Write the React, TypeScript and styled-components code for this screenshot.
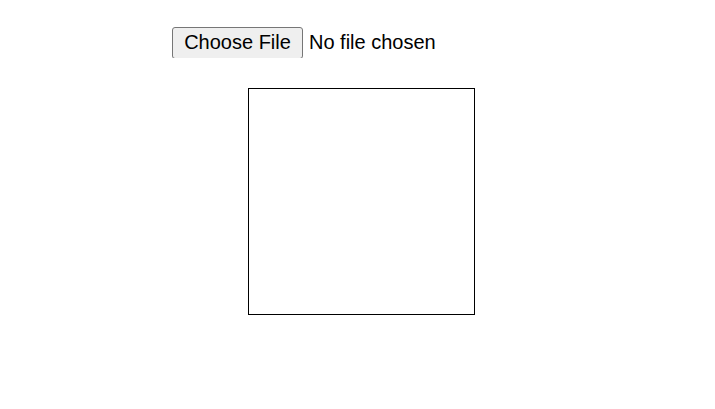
import React from "react";
import styled, { createGlobalStyle } from "styled-components";

const Global = createGlobalStyle`
  html, body { margin: 0; padding: 0; background: #fff; }
  body { font-family: "Liberation Sans", Arial, sans-serif; }
`;

const Page = styled.div`
  display: flex;
  flex-direction: column;
  align-items: flex-start;
  padding: 26px 0 0 172px;
  gap: 30px;
`;

const FileInput = styled.input`
  font-family: "Liberation Sans", Arial, sans-serif;
  font-size: 20px;
  color: #000;
  line-height: 32px;
  height: 32px;
  &::file-selector-button {
    font-family: "Liberation Sans", Arial, sans-serif;
    font-size: 20px;
    height: 32px;
    width: 131px;
    padding: 0;
    margin: 0 6px 0 0;
    border: 1px solid #767676;
    border-radius: 3px;
    background: #efefef;
    color: #000;
  }
`;

const Canvas = styled.canvas`
  display: block;
  width: 225px;
  height: 225px;
  border: 1px solid #000;
  margin-left: 76px;
`;

export default function App() {
  return (
    <>
      <Global />
      <Page>
        <FileInput type="file" />
        <Canvas width={225} height={225} />
      </Page>
    </>
  );
}
